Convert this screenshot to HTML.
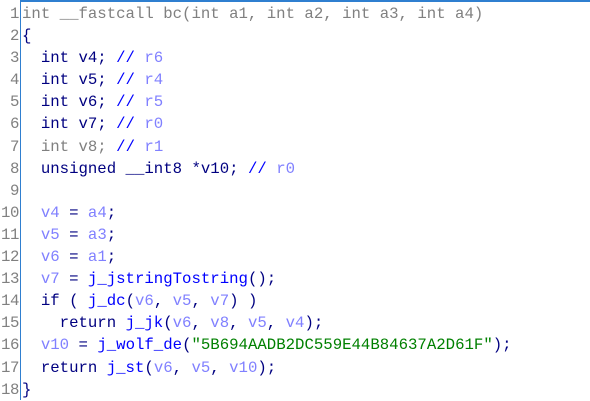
<!DOCTYPE html><html><head><style>
body{margin:0;width:590px;height:400px;background:#fff;overflow:hidden;position:relative;font-family:"Liberation Mono",monospace;font-size:15.7px}
#top{position:absolute;left:20px;top:0;width:570px;height:2px;background:#2f7fd0}
#left{position:absolute;left:20px;top:0;width:1px;height:400px;background:#2f7fd0}
.ln{position:absolute;left:0;width:19px;text-align:right;color:#808080;top:3px;line-height:22.1px;white-space:pre;letter-spacing:-0.4px}
.code{position:absolute;left:22px;top:3px;line-height:22.1px;white-space:pre;color:#000080}
.g{color:#808080}.v{color:#8080ff}.f{color:#0000ff}.s{color:#008000}.c{color:#0000ff}
</style></head><body>
<div id="top"></div><div id="left"></div>
<div class="ln">1
2
3
4
5
6
7
8
9
10
11
12
13
14
15
16
17
18</div>
<div class="code"><span class="g">int __fastcall bc(int a1, int a2, int a3, int a4)</span>
{
  int v4; <span class="c">//</span> <span class="v">r6</span>
  int v5; <span class="c">//</span> <span class="v">r4</span>
  int v6; <span class="c">//</span> <span class="v">r5</span>
  int v7; <span class="c">//</span> <span class="v">r0</span>
  <span class="g">int v8;</span> <span class="c">//</span> <span class="v">r1</span>
  unsigned __int8 *v10; <span class="c">//</span> <span class="v">r0</span>

  <span class="v">v4</span> = <span class="v">a4</span>;
  <span class="v">v5</span> = <span class="v">a3</span>;
  <span class="v">v6</span> = <span class="v">a1</span>;
  <span class="v">v7</span> = <span class="f">j_jstringTostring</span>();
  if ( <span class="f">j_dc</span>(<span class="v">v6</span>, <span class="v">v5</span>, <span class="v">v7</span>) )
    return <span class="f">j_jk</span>(<span class="v">v6</span>, <span class="v">v8</span>, <span class="v">v5</span>, <span class="v">v4</span>);
  <span class="v">v10</span> = <span class="f">j_wolf_de</span>(<span class="s">"5B694AADB2DC559E44B84637A2D61F"</span>);
  return <span class="f">j_st</span>(<span class="v">v6</span>, <span class="v">v5</span>, <span class="v">v10</span>);
}</div>
</body></html>
